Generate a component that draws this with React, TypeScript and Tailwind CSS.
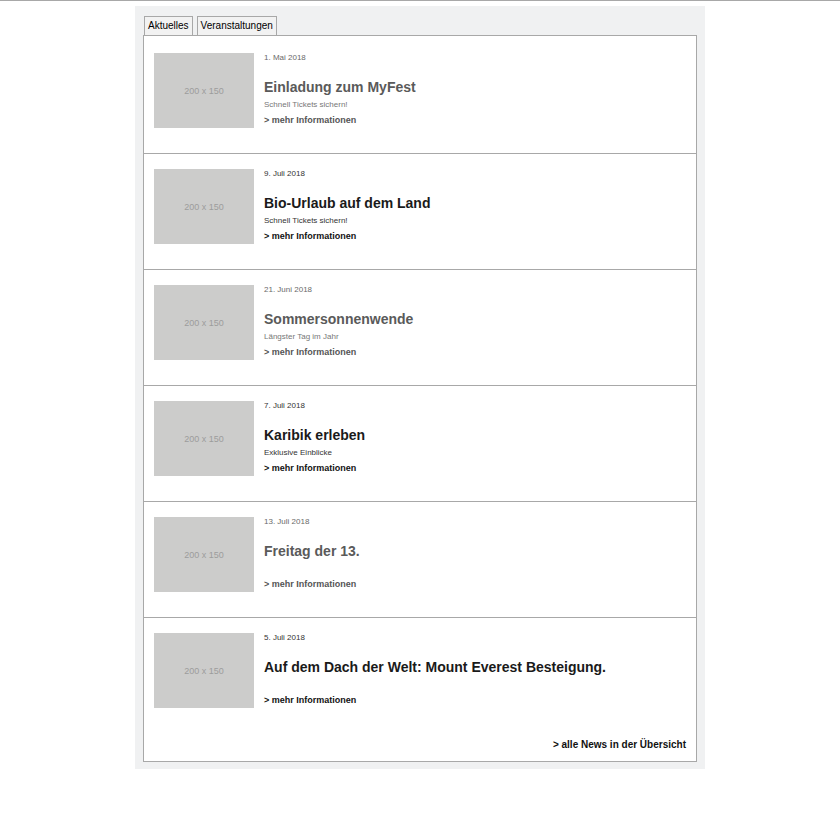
type NewsItem = {
    date: string;
    title: string;
    teaser?: string;
};

const NEWS_ITEMS: NewsItem[] = [
    { date: "1. Mai 2018", title: "Einladung zum MyFest", teaser: "Schnell Tickets sichern!" },
    { date: "9. Juli 2018", title: "Bio-Urlaub auf dem Land", teaser: "Schnell Tickets sichern!" },
    { date: "21. Juni 2018", title: "Sommersonnenwende", teaser: "Längster Tag im Jahr" },
    { date: "7. Juli 2018", title: "Karibik erleben", teaser: "Exklusive Einblicke" },
    { date: "13. Juli 2018", title: "Freitag der 13." },
    { date: "5. Juli 2018", title: "Auf dem Dach der Welt: Mount Everest Besteigung." },
];

function NewsRow({ item, muted, last }: { item: NewsItem; muted: boolean; last: boolean }) {
    return (
        <div className={`flex gap-[10px] px-[10px] pt-[15px] ${last ? "pb-[24px]" : "border-b border-[#a8a8a8] pb-[25px]"}`}>
            <div className="flex h-[75px] w-[100px] shrink-0 items-center justify-center bg-[#cccccb] pt-[2px] text-[9px] text-[#9c9c9c]">
                200 x 150
            </div>
            <div className="flex flex-col">
                <span className={`text-[8px] leading-[10px] ${muted ? "text-[#6a6a6a]" : "text-[#333]"}`}>{item.date}</span>
                <span className={`mt-[16px] text-[14px] font-bold leading-[16px] ${muted ? "text-[#5a5a5a]" : "text-[#1a1a1a]"}`}>
                    {item.title}
                </span>
                <span className={`mt-[5px] h-[10px] text-[8px] leading-[10px] ${muted ? "text-[#777]" : "text-[#333]"}`}>
                    {item.teaser}
                </span>
                <a className={`mt-[4px] text-[9px] font-bold leading-[12px] ${muted ? "text-[#555]" : "text-[#111]"}`}>
                    &gt; mehr Informationen
                </a>
            </div>
        </div>
    );
}

export default function App() {
    return (
        <div className="min-h-[840px] border-t border-[#a8a8a8] bg-white font-['Liberation_Sans',Arial,sans-serif]">
            <div className="ml-[135px] mt-[5px] w-[570px] bg-[#f0f1f2] px-[8px] pt-[10px] pb-[7px]">
                <div className="flex gap-[4px] pl-[1px]">
                    <span className="h-[19px] border border-b-0 border-[#a8a8a8] bg-[#f2f2f2] px-[3px] text-[10px] leading-[18px] text-black">
                        Aktuelles
                    </span>
                    <span className="h-[19px] border border-b-0 border-[#a8a8a8] bg-[#f2f2f2] px-[3px] text-[10px] leading-[18px] text-black">
                        Veranstaltungen
                    </span>
                </div>
                <div className="border border-[#a8a8a8] bg-white pt-[2px]">
                    {NEWS_ITEMS.map((item, index) => (
                        <NewsRow
                            key={item.title}
                            item={item}
                            muted={index % 2 === 0}
                            last={index === NEWS_ITEMS.length - 1}
                        />
                    ))}
                    <div className="flex justify-end pr-[10px] pt-[7px] pb-[10px]">
                        <a className="text-[10px] font-bold leading-[12px] text-[#111]">&gt; alle News in der Übersicht</a>
                    </div>
                </div>
            </div>
        </div>
    );
}
